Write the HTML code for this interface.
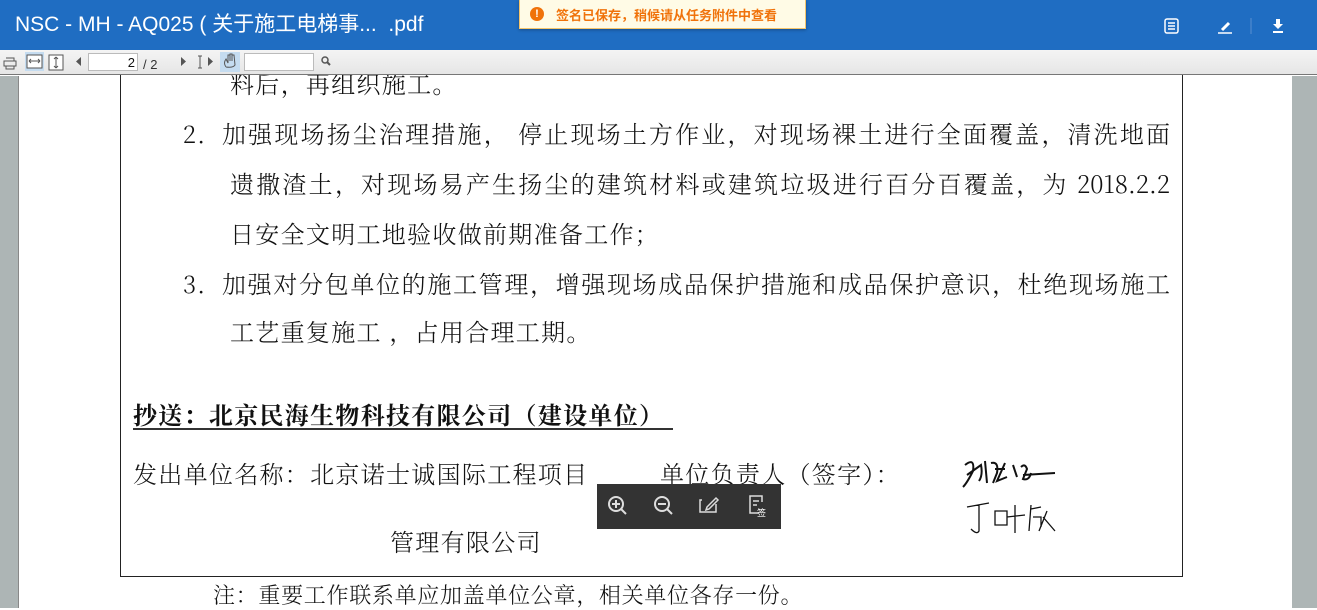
<!DOCTYPE html>
<html><head><meta charset="utf-8"><style>
*{margin:0;padding:0;box-sizing:border-box}
body{width:1317px;height:608px;overflow:hidden;position:relative;background:#fff;font-family:"Liberation Sans","Noto Sans CJK SC",sans-serif}
.hdr{position:absolute;left:0;top:0;width:1317px;height:50px;background:#1f6dc2}
.title{position:absolute;left:15px;top:8px;color:#fff;font-size:21px;white-space:nowrap}
.toast{position:absolute;left:519px;top:0;width:287px;height:29px;background:#fffbe6;border:1px solid #f5c56b;border-top:none;box-shadow:0 1px 3px rgba(0,0,0,.3)}
.toast span{position:absolute;left:36px;top:5px;font-size:13px;font-weight:bold;color:#f0720a;white-space:nowrap}
.toast i{position:absolute;left:10px;top:7px;width:14px;height:14px;border-radius:50%;background:#f0720a;color:#fff;font-style:normal;font-size:11px;font-weight:bold;text-align:center;line-height:14px}
.tb{position:absolute;left:0;top:50px;width:1317px;height:25px;background:linear-gradient(#f4f4f4,#e6e6e6);border-bottom:1px solid #777}
.pg{position:absolute;left:0;top:76px;width:1317px;height:532px;background:#adb5b5}
.paper{position:absolute;left:18px;top:76px;width:1274px;height:532px;background:#fff;border-left:1px solid #888}
.box{position:absolute;left:120px;top:60px;width:1063px;height:517px;border:1px solid #222;border-top:none}
.t{position:absolute;font-family:"Noto Serif CJK SC","Liberation Serif",serif;font-size:24px;line-height:30px;color:#111;white-space:nowrap;font-weight:300;letter-spacing:1.3px}
.j{text-align:justify;text-align-last:justify;letter-spacing:0}
.dark{position:absolute;left:597px;top:484px;width:184px;height:45px;background:#333}
</style></head><body>
<div class="pg"></div>
<div class="paper"></div>
<div class="box"></div>

<div class="t" style="left:230px;top:68px">料后，再组织施工。</div>
<div class="t" style="left:183px;top:118px">2.</div>
<div class="t j" style="left:222px;top:118px;width:948px">加强现场扬尘治理措施， 停止现场土方作业，对现场裸土进行全面覆盖，清洗地面</div>
<div class="t j" style="left:230px;top:168px;width:940px">遗撒渣土，对现场易产生扬尘的建筑材料或建筑垃圾进行百分百覆盖，为 2018.2.2</div>
<div class="t" style="left:230px;top:218px">日安全文明工地验收做前期准备工作；</div>
<div class="t" style="left:183px;top:268px">3.</div>
<div class="t j" style="left:222px;top:268px;width:948px">加强对分包单位的施工管理，增强现场成品保护措施和成品保护意识，杜绝现场施工</div>
<div class="t" style="left:230px;top:316px">工艺重复施工 ，占用合理工期。</div>
<div class="t" style="left:133px;top:400px;font-weight:bold;border-bottom:2px solid #333;line-height:28px;width:540px">抄送：北京民海生物科技有限公司（建设单位）</div>
<div class="t" style="left:133px;top:458px">发出单位名称：北京诺士诚国际工程项目</div>
<div class="t" style="left:660px;top:458px">单位负责人（签字）：</div>
<div class="t" style="left:390px;top:526px">管理有限公司</div>
<div class="t" style="left:213px;top:580px;font-size:22px;letter-spacing:0.7px">注：重要工作联系单应加盖单位公章，相关单位各存一份。</div>

<svg style="position:absolute;left:955px;top:455px" width="110" height="85" fill="none" stroke="#111" stroke-width="2">
<path d="M10 10 q10 -8 8 6 q-6 12 -10 16 M12 20 l14 -10 q2 10 -2 16 M30 6 l2 22 M36 8 q8 -2 6 10 l-4 10 M40 14 l10 0 M50 8 l-8 18 l10 -4 M58 10 l4 12 M66 12 q4 -4 6 2 l-4 10 q6 2 8 -6 M68 20 l32 -2"/>
<path stroke-width="1.3" d="M12 52 l22 -4 M24 50 l0 26 q-2 4 -8 -2 M40 56 l0 14 l12 0 l0 -14 z M60 50 l0 28 M52 62 l18 -2 M76 50 l-2 26 M76 54 l10 -2 M78 62 l8 0 l0 10 M92 56 l-8 20 M88 62 l12 14"/>
</svg>

<div class="dark">
<svg width="184" height="45" fill="none" stroke="#ddd" stroke-width="2">
<circle cx="19" cy="20" r="7"/><path d="M24 25 l5 5 M15 20 h8 M19 16 v8"/>
<circle cx="65" cy="20" r="7"/><path d="M70 25 l5 5 M61 20 h8"/>
<path stroke-width="1.5" d="M105 16 h-2 v12 h16 v-8 M110 23 l9 -9 l2 2 l-9 9 l-3 1 z"/>
<path stroke-width="1.5" d="M162 29 h-9 v-17 h12 v6 M156 17 h6 M156 21 h4"/>
<text x="160" y="32" font-size="9" fill="#fff" stroke="none" font-family="Noto Sans CJK SC">签</text>
</svg>
</div>

<div class="hdr">
<div class="title">NSC - MH - AQ025 ( 关于施工电梯事...&nbsp;&nbsp;.pdf</div>
<svg style="position:absolute;left:1160px;top:14px" width="140" height="24" fill="none" stroke="#fff" stroke-width="1.5">
<rect x="5" y="5" width="13" height="14" rx="2"/><path d="M8 9 h7 M8 12 h7 M8 15 h7"/>
<path stroke-width="3" d="M62 16 l7 -7"/><path stroke-width="1.5" d="M58 19 h14"/>
<path stroke="#5a8fd0" stroke-width="1" d="M91 4 v16"/>
<path fill="#fff" stroke="none" d="M116 5 h4 v5 h3 l-5 5 l-5 -5 h3 z M113 17 h10 v2 h-10 z"/>
</svg>
</div>
<div class="toast"><i>!</i><span>签名已保存，稍候请从任务附件中查看</span></div>

<div class="tb">
<svg width="340" height="25" fill="none" stroke="#555" stroke-width="1">
<path d="M6 8 h8 v3 M4 11 h12 v5 h-12 z M6 16 v3 h8 v-3"/>
<rect x="25" y="2" width="19" height="19" fill="#c5dcf0" stroke="none"/>
<rect x="27" y="5" width="15" height="13" fill="#fff"/><path d="M29 11 h11 M29 11 l2 -2 M29 11 l2 2 M40 11 l-2 -2 M40 11 l-2 2"/>
<rect x="49" y="5" width="14" height="15" fill="#fff"/><path d="M56 7 v11 M56 7 l-2 2 M56 7 l2 2 M56 18 l-2 -2 M56 18 l2 -2"/>
<path fill="#555" stroke="none" d="M81 7 v9 l-5 -4.5 z M181 7 v9 l5 -4.5 z M208 7 v9 l5 -4.5 z"/>
<rect x="88.5" y="3.5" width="49" height="17" fill="#fff" stroke="#bbb"/>
<path d="M200 6 v12 M198 6 h4 M198 18 h4"/>
<rect x="220" y="2" width="20" height="20" fill="#c5dcf0" stroke="none"/>
<path d="M226 17 q-3 -4 0 -8 l2 4 l0 -8 l2 0 l0 6 l0 -7 l2 0 l0 7 l0 -6 l2 0 l1 10 q-2 3 -9 2"/>
<rect x="244.5" y="3.5" width="69" height="17" fill="#fff" stroke="#bbb"/>
<circle cx="325" cy="10" r="3" stroke-width="1.5"/><path stroke-width="2" d="M327 12 l3 3"/>
<text x="135" y="17" text-anchor="end" fill="#111" stroke="none" font-size="13" font-family="Liberation Sans">2</text>
<text x="143" y="19" fill="#333" stroke="none" font-size="13" font-family="Liberation Sans">/ 2</text>
</svg>
</div>
</body></html>
